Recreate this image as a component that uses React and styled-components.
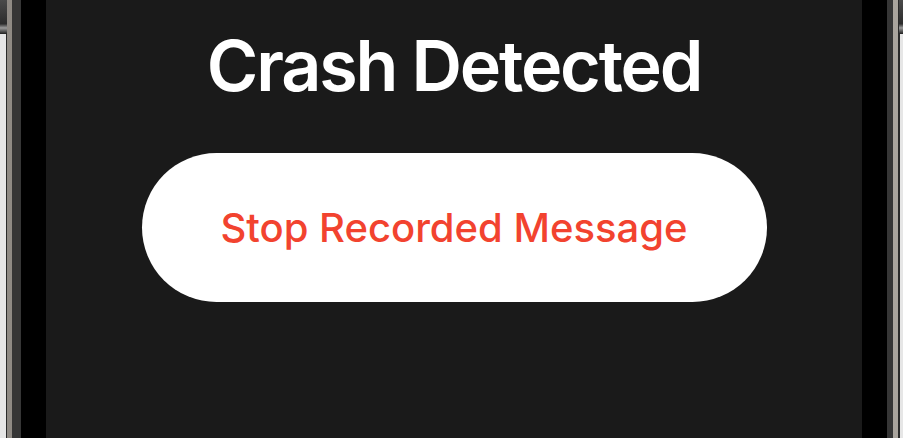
import React from 'react'
import styled, { createGlobalStyle } from 'styled-components'

const GlobalStyle = createGlobalStyle`
  html, body {
    margin: 0;
    padding: 0;
    background: #e6e6e6;
  }
  body {
    font-family: Inter, "Noto Sans", "Liberation Sans", sans-serif;
    -webkit-font-smoothing: antialiased;
  }
`

const Page = styled.div`
  position: relative;
  display: flex;
  height: 438px;
  padding: 0 3px 0 6px;
  box-sizing: border-box;
  overflow: hidden;
`

const SideButton = styled.div`
  position: absolute;
  top: 0;
  ${({ side }) => (side === 'left' ? 'left: 0;' : 'right: 0;')}
  width: ${({ side }) => (side === 'left' ? '7px' : '4px')};
  height: 34px;
  background: linear-gradient(180deg, #4a4a4a 0%, #2c2c2c 70%, #9a9a9a 82%, #1e1e1e 100%);
`

const Frame = styled.div`
  flex: 1;
  display: flex;
  border-left: 1px solid #2a2a2a;
  border-right: 2px solid #2a2a2a;
  background: linear-gradient(90deg, #8f8a84 0%, #cdc8c0 40%, #a9a49d 100%);
  padding: 0 5px 0 5px;
`

const Bezel = styled.div`
  flex: 1;
  display: flex;
  background: #363636;
  padding: 0 6px 0 9px;
`

const Glass = styled.div`
  flex: 1;
  display: flex;
  background: #000;
  padding: 0 25px;
`

const Screen = styled.div`
  flex: 1;
  display: flex;
  flex-direction: column;
  align-items: center;
  background: #1a1a1a;
  padding-top: 31px;
`

const Title = styled.h1`
  margin: 0;
  color: #ffffff;
  font-size: 70px;
  line-height: 1;
  font-weight: 600;
  letter-spacing: -2.2px;
`

const ActionButton = styled.button`
  margin-top: 52px;
  width: 625px;
  height: 149px;
  border: none;
  border-radius: 75px;
  background: #ffffff;
  color: #f2432f;
  font-family: inherit;
  font-size: 40px;
  line-height: 1;
  font-weight: 500;
  display: flex;
  align-items: center;
  justify-content: center;
  cursor: pointer;
`

export default function App() {
  return (
    <>
      <GlobalStyle />
      <Page>
        <SideButton side="left" />
        <SideButton side="right" />
        <Frame>
          <Bezel>
            <Glass>
              <Screen>
                <Title>Crash Detected</Title>
                <ActionButton>Stop Recorded Message</ActionButton>
              </Screen>
            </Glass>
          </Bezel>
        </Frame>
      </Page>
    </>
  )
}
